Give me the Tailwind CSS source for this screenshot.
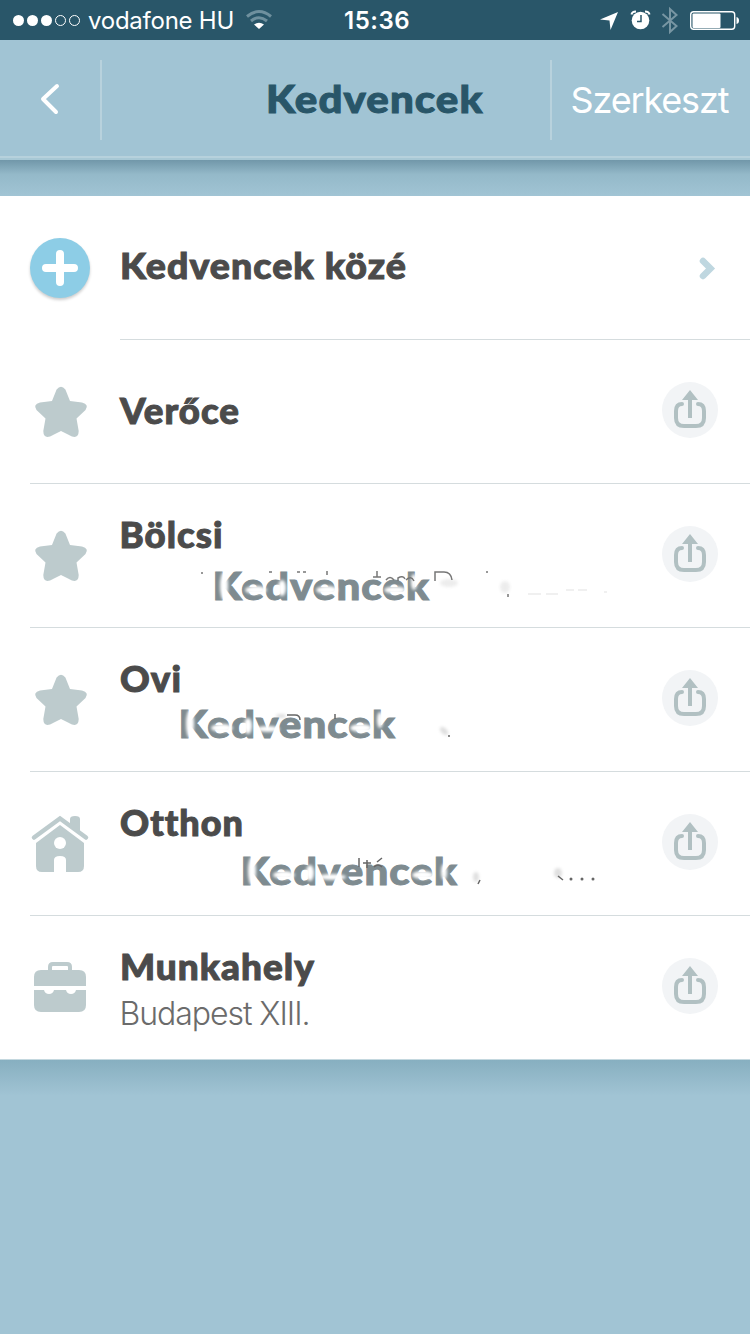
<!DOCTYPE html>
<html lang="hu">
<head>
    <meta charset="UTF-8">
    <meta name="viewport" content="width=device-width, initial-scale=1.0">
    <script src="https://cdn.jsdelivr.net/npm/@tailwindcss/browser@4"></script>
    <title>Kedvencek</title>
</head>
<body class="w-[750px] h-[1334px] overflow-hidden bg-[#a1c4d4] font-['Inter',sans-serif]">

<!-- Shared icons -->
<svg class="hidden">
    <symbol id="star" viewBox="0 1 60 60">
        <path d="M26.6 8.5Q31 3 35.4 8.5L40 20L52 21.500Q59.500 23.500 55.500 29L46.500 37.500L48.700 50Q48.500 57.500 42 55.500L31 50L20 55.500Q13.500 57.500 13.300 50L15.500 37.500L6.500 29Q2.500 23.500 10 21.500L22 20Z" fill="#bdcbcd"/>
    </symbol>
    <symbol id="share" viewBox="0 0 56 56">
        <circle cx="28" cy="28" r="28" fill="#f2f4f6"/>
        <path d="M20 22Q14 22 14 29V36Q14 44 22 44H34Q42 44 42 36V29Q42 22 36 22" fill="none" stroke="#b1c0c2" stroke-width="4" stroke-linecap="round"/>
        <path d="M28 8L36 18H30V36H26V18H20Z" fill="#b1c0c2"/>
    </symbol>
    <filter id="soft" x="-50%" y="-50%" width="200%" height="200%"><feGaussianBlur stdDeviation="1.500"/></filter>
</svg>

<!-- Status bar -->
<div class="flex items-center h-10 bg-[#295669] text-white">
    <svg class="ml-3 w-[70px] h-10" viewBox="0 0 70 40">
        <g fill="#fff"><circle cx="6.500" cy="20.500" r="5.500"/><circle cx="20.500" cy="20.500" r="5.500"/><circle cx="34.500" cy="20.500" r="5.500"/></g>
        <g fill="none" stroke="#fff"><circle cx="48.500" cy="20.500" r="5"/><circle cx="62.500" cy="20.500" r="5"/></g>
    </svg>
    <div class="ml-[6px] mt-0.5 w-[146px] text-[24px] tracking-[-0.25px] whitespace-nowrap">vodafone HU</div>
    <svg class="ml-[11px] w-[28px] h-10" viewBox="0 0 28 40">
        <path d="M2 16.500Q14 6.500 26 16.500M6 21Q14 14.500 22 21" fill="none" stroke="#6f909e" stroke-width="3"/>
        <path d="M9 24.500Q14 21 19 24.500L14 29Z" fill="#fff"/>
    </svg>
    <div class="ml-[71px] mt-0.5 w-[70px] text-[24px] font-semibold tracking-[0.5px]">15:36</div>
    <svg class="ml-auto w-[150px] h-10" viewBox="0 0 150 40">
        <path d="M18 12L10.500 30L9.500 20.500L0 19.500Z" fill="#fff"/>
        <circle cx="40.500" cy="20.500" r="8.800" fill="#fff"/>
        <path d="M31.500 14.500Q32 11.500 36 11.500M49.500 14.500Q49 11.500 45 11.500" fill="none" stroke="#fff" stroke-width="2"/>
        <path d="M41 15V21.500H37" fill="none" stroke="#295669" stroke-width="1.500"/>
        <path d="M62.500 14L76.500 26L70 32V9L76.500 15L62.500 27" fill="none" stroke="#7896a3" stroke-width="2"/>
        <rect x="90.700" y="11.700" width="44" height="17.600" rx="3" fill="none" stroke="#fff" stroke-width="1.400"/>
        <rect x="92.500" y="13.500" width="28" height="14.500" rx="1" fill="#fff"/>
        <path d="M136.500 17Q139 17.500 139 20.500T136.500 24Z" fill="#fff"/>
    </svg>
</div>

<!-- Header -->
<header class="flex h-[120px] border-b-2 border-[#a7c8d5]">
    <div class="flex flex-1 items-center border-b-2 border-[#b6d1dc]">
        <svg class="w-[100px] h-[60px]" viewBox="0 0 100 60"><path d="M57 17L43 30L56 43" fill="none" stroke="#fff" stroke-width="4" stroke-linecap="round" stroke-linejoin="round" transform="translate(0 1)"/></svg>
        <div class="w-[2px] h-20 mt-1 bg-[#b8d2dd]"></div>
        <svg class="w-[448px] h-[116px]" viewBox="102 40 448 116"><text x="266" y="112.500" textLength="217.500" lengthAdjust="spacingAndGlyphs" class="font-['Lato'] font-black text-[38.5px] tracking-[1px]" fill="#295669" stroke="#295669" stroke-width="1">Kedvencek</text></svg>
        <div class="w-[2px] h-20 mt-1 bg-[#b8d2dd]"></div>
        <svg class="w-[198px] h-[116px]" viewBox="552 40 198 116"><text x="570.500" y="113" textLength="159" class="font-['Inter'] font-normal text-[36px]" fill="#fff">Szerkeszt</text></svg>
    </div>
</header>
<div class="h-9 bg-linear-to-b from-[#7197a9] via-[#94b9c9] via-40% to-[#a1c4d4]"></div>

<!-- Favourites list -->
<main class="bg-white border-b border-[#c4d8df]">
    <div class="flex items-center h-36">
        <div class="w-[120px] pl-[30px]">
            <div class="size-[60px] rounded-full bg-[#8dcde6] shadow-[0_2px_3px_#0003]">
                <svg viewBox="0 0 60 60"><path d="M30 16V44M16 30H44" stroke="#fff" stroke-width="8" stroke-linecap="round"/></svg>
            </div>
        </div>
        <div class="flex flex-1 items-center h-full border-b border-[#d5dcde]">
            <svg class="w-[530px] h-[143px]" viewBox="120 196 530 143"><text x="120" y="279" textLength="287" lengthAdjust="spacingAndGlyphs" class="font-['Lato'] font-black text-[36px] tracking-[1px]" fill="#4b4b4b" stroke="#4b4b4b" stroke-width="1">Kedvencek közé</text></svg>
            <svg class="ml-12 w-5 h-[30px]" viewBox="0 0 20 30"><path d="M5 8L12.500 15.500L5 23" fill="none" stroke="#bfd7e0" stroke-width="6.500" stroke-linecap="round" stroke-linejoin="miter"/></svg>
        </div>
    </div>

    <div class="flex items-center h-36 ml-[30px] border-b border-[#d5dcde]">
        <svg class="w-[60px] h-[60px]"><use href="#star"/></svg>
        <svg class="ml-[30px] w-[530px] h-[143px] overflow-visible" viewBox="120 340 530 143"><text x="120" y="423.500" textLength="120" lengthAdjust="spacingAndGlyphs" class="font-['Lato'] font-black text-[36px] tracking-[1px]" fill="#4b4b4b" stroke="#4b4b4b" stroke-width="1">Verőce</text></svg>
        <svg class="ml-3 mb-1 size-14"><use href="#share"/></svg>
    </div>

    <div class="flex items-center h-36 ml-[30px] border-b border-[#d5dcde]">
        <svg class="w-[60px] h-[60px]"><use href="#star"/></svg>
        <svg class="ml-[30px] w-[530px] h-[143px]" viewBox="120 484 530 143">
            <text x="119.500" y="548" textLength="104" lengthAdjust="spacingAndGlyphs" class="font-['Lato'] font-black text-[36px] tracking-[1px]" fill="#4b4b4b" stroke="#4b4b4b" stroke-width="1">Bölcsi</text>
            <text x="212.500" y="600" textLength="217.500" lengthAdjust="spacingAndGlyphs" class="font-['Lato'] font-black text-[38.5px] tracking-[1px]" fill="#7e8b90" stroke="#7e8b90" stroke-width="1">Kedvencek</text>
            <g fill="#fff" filter="url(#soft)"><ellipse cx="224" cy="586" rx="4" ry="14"/><ellipse cx="256" cy="590" rx="11" ry="4"/><ellipse cx="282" cy="588" rx="4" ry="8"/><ellipse cx="327" cy="590" rx="11" ry="4"/><ellipse cx="395" cy="590" rx="11" ry="3.500"/><ellipse cx="414" cy="582" rx="3" ry="8"/></g>
            <g stroke="#777" stroke-width="1.500" fill="none"><path d="M201 573h2M269 572h3M297 572h3M303 572h3M327 571v4M377 571v6M373 577h8M386 580q4-5 8 0M398 581v-3q5-3 7 1M406 580q5-5 8 1M435 581v-9h9q7 0 8 8M486 572h2M508 594v3"/></g>
            <g fill="#777" opacity=".13" filter="url(#soft)"><ellipse cx="449" cy="583" rx="9" ry="4"/><ellipse cx="505" cy="587" rx="5" ry="6"/></g>
            <path d="M528 594h13M546 594h12M566 590h8M578 590h9M604 592h3" stroke="#f0f0f0" stroke-width="2"/>
        </svg>
        <svg class="ml-3 mb-1 size-14"><use href="#share"/></svg>
    </div>

    <div class="flex items-center h-36 ml-[30px] border-b border-[#d5dcde]">
        <svg class="w-[60px] h-[60px]"><use href="#star"/></svg>
        <svg class="ml-[30px] w-[530px] h-[143px]" viewBox="120 628 530 143">
            <text x="120" y="692" textLength="62" lengthAdjust="spacingAndGlyphs" class="font-['Lato'] font-black text-[36px] tracking-[1px]" fill="#4b4b4b" stroke="#4b4b4b" stroke-width="1">Ovi</text>
            <text x="178.500" y="738" textLength="217.500" lengthAdjust="spacingAndGlyphs" class="font-['Lato'] font-black text-[38.5px] tracking-[1px]" fill="#7e8b90" stroke="#7e8b90" stroke-width="1">Kedvencek</text>
            <g fill="#fff" filter="url(#soft)"><ellipse cx="190" cy="724" rx="4" ry="14"/><ellipse cx="222" cy="728" rx="11" ry="4"/><ellipse cx="248" cy="726" rx="4" ry="8"/><ellipse cx="268" cy="729" rx="12" ry="3"/><ellipse cx="361" cy="728" rx="11" ry="4"/><ellipse cx="380" cy="720" rx="3" ry="8"/></g>
            <path d="M287 715h8q5 0 5 5M335 714v5M449 735v2" fill="none" stroke="#666" stroke-width="1.500"/>
            <g fill="#666" opacity=".2" filter="url(#soft)"><ellipse cx="281" cy="716" rx="5" ry="2"/><ellipse cx="444" cy="731" rx="5" ry="3" transform="rotate(45 444 731)"/></g>
        </svg>
        <svg class="ml-3 mb-1 size-14"><use href="#share"/></svg>
    </div>

    <div class="flex items-center h-36 ml-[30px] border-b border-[#d5dcde]">
        <svg class="w-[60px] h-[60px]" viewBox="30 814 60 60">
            <path d="M36 843L60 825L84 843V866Q84 872 78 872H66V860Q66 856 60 856T54 860V872H42Q36 872 36 866Z" fill="#bdcbcd"/>
            <path d="M34 837.500L60 818.500L86 837.500" fill="none" stroke="#bdcbcd" stroke-width="4.500" stroke-linecap="round"/>
            <path d="M70 827V819Q70 816 75 816T80 819V834Z" fill="#bdcbcd"/>
            <circle cx="60" cy="843" r="6" fill="#fff"/>
        </svg>
        <svg class="ml-[30px] w-[530px] h-[143px]" viewBox="120 772 530 143">
            <text x="120" y="836" textLength="124" lengthAdjust="spacingAndGlyphs" class="font-['Lato'] font-black text-[36px] tracking-[1px]" fill="#4b4b4b" stroke="#4b4b4b" stroke-width="1">Otthon</text>
            <text x="240.500" y="885" textLength="217.500" lengthAdjust="spacingAndGlyphs" class="font-['Lato'] font-black text-[38.5px] tracking-[1px]" fill="#7e8b90" stroke="#7e8b90" stroke-width="1">Kedvencek</text>
            <g fill="#fff" filter="url(#soft)"><ellipse cx="252" cy="871" rx="4" ry="14"/><ellipse cx="284" cy="875" rx="11" ry="4"/><ellipse cx="310" cy="873" rx="4" ry="8"/><ellipse cx="332" cy="877" rx="14" ry="3"/><ellipse cx="423" cy="875" rx="11" ry="4"/><ellipse cx="444" cy="872" rx="3" ry="8"/></g>
            <path d="M359 858v9M367 860v8M363 863h8M377 862l5-4M374 867q4-4 8 0M478 884l2-4M558 876l5 4" fill="none" stroke="#666" stroke-width="1.500"/>
            <g fill="#666"><circle cx="571" cy="879" r="1.500"/><circle cx="582" cy="879" r="1.500"/><circle cx="593" cy="879" r="1.500"/></g>
            <g fill="#666" opacity=".2" filter="url(#soft)"><ellipse cx="476" cy="877" rx="3" ry="5"/><ellipse cx="558" cy="873" rx="4" ry="5"/></g>
        </svg>
        <svg class="ml-3 mb-1 size-14"><use href="#share"/></svg>
    </div>

    <div class="flex items-center h-[143px] ml-[30px]">
        <svg class="w-[60px] h-[60px]" viewBox="30 958 60 60">
            <path d="M50 971V967Q50 964 53 964H67Q70 964 70 967V971" fill="none" stroke="#bdcbcd" stroke-width="4"/>
            <path d="M34 986V977Q34 970 41 970H79Q86 970 86 977V986ZM34 990H44Q45 994 49 994T54 990H66Q67 994 71 994T76 990H86V1005Q86 1012 79 1012H41Q34 1012 34 1005Z" fill="#bdcbcd"/>
        </svg>
        <svg class="ml-[30px] w-[530px] h-[143px]" viewBox="120 916 530 143">
            <text x="120" y="980" textLength="195" lengthAdjust="spacingAndGlyphs" class="font-['Lato'] font-black text-[36px] tracking-[1px]" fill="#4b4b4b" stroke="#4b4b4b" stroke-width="1">Munkahely</text>
            <text x="119.500" y="1025" textLength="191" class="font-['Inter'] font-light text-[32px]" fill="#6b6b6b">Budapest XIII.</text>
        </svg>
        <svg class="ml-3 mb-1 size-14"><use href="#share"/></svg>
    </div>
</main>
<div class="h-9 bg-linear-to-b from-[#87afc0] to-[#a1c4d4]"></div>

</body>
</html>
